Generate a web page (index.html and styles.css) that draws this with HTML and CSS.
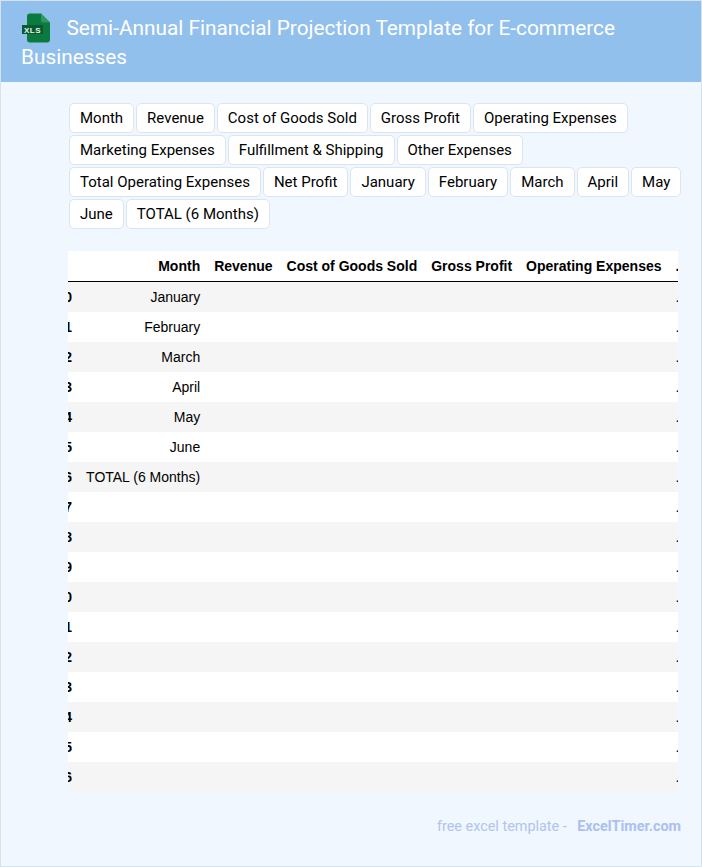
FILE: index.html
```html
<!DOCTYPE html>
<html lang="en">
<head>
<meta charset="utf-8">
<title>Semi-Annual Financial Projection Template for E-commerce Businesses</title>
<link rel="stylesheet" href="styles.css">
</head>
<body>
<div class="page">
  <header class="hero">
    <h1 class="title"><svg class="xls" viewBox="0 0 30 32" width="30" height="32" aria-hidden="true"><path d="M9 1.5h11l9 9v17a3 3 0 0 1-3 3H9a3 3 0 0 1-3-3v-23a3 3 0 0 1 3-3z" fill="#0b7a3e"/><path d="M20 1.5l9 9h-7a2 2 0 0 1-2-2z" fill="#2c9a5f"/><rect x="1" y="13" width="21" height="9" fill="#0a5a31"/><text x="11.5" y="20.6" class="xls-text" text-anchor="middle">XLS</text></svg>Semi-Annual Financial Projection Template for E-commerce Businesses</h1>
  </header>
  <main class="content">
    <div class="tags">
      <span class="tag">Month</span><span class="tag">Revenue</span><span class="tag">Cost of Goods Sold</span><span class="tag">Gross Profit</span><span class="tag">Operating Expenses</span><span class="tag">Marketing Expenses</span><span class="tag">Fulfillment &amp; Shipping</span><span class="tag">Other Expenses</span><span class="tag">Total Operating Expenses</span><span class="tag">Net Profit</span><span class="tag">January</span><span class="tag">February</span><span class="tag">March</span><span class="tag">April</span><span class="tag">May</span><span class="tag">June</span><span class="tag">TOTAL (6 Months)</span>
    </div>
    <div class="scroller">
      <table class="sheet">
        <thead>
          <tr><th class="idx"></th><th class="month">Month</th><th class="c-rev">Revenue</th><th class="c-cogs">Cost of Goods Sold</th><th class="c-gp">Gross Profit</th><th class="c-op">Operating Expenses</th><th>...</th></tr>
        </thead>
        <tbody>
          <tr><th class="idx">0</th><td>January</td><td></td><td></td><td></td><td></td><td>...</td></tr>
          <tr><th class="idx">1</th><td>February</td><td></td><td></td><td></td><td></td><td>...</td></tr>
          <tr><th class="idx">2</th><td>March</td><td></td><td></td><td></td><td></td><td>...</td></tr>
          <tr><th class="idx">3</th><td>April</td><td></td><td></td><td></td><td></td><td>...</td></tr>
          <tr><th class="idx">4</th><td>May</td><td></td><td></td><td></td><td></td><td>...</td></tr>
          <tr><th class="idx">5</th><td>June</td><td></td><td></td><td></td><td></td><td>...</td></tr>
          <tr><th class="idx">6</th><td>TOTAL (6 Months)</td><td></td><td></td><td></td><td></td><td>...</td></tr>
          <tr><th class="idx">7</th><td></td><td></td><td></td><td></td><td></td><td>...</td></tr>
          <tr><th class="idx">8</th><td></td><td></td><td></td><td></td><td></td><td>...</td></tr>
          <tr><th class="idx">9</th><td></td><td></td><td></td><td></td><td></td><td>...</td></tr>
          <tr><th class="idx">10</th><td></td><td></td><td></td><td></td><td></td><td>...</td></tr>
          <tr><th class="idx">11</th><td></td><td></td><td></td><td></td><td></td><td>...</td></tr>
          <tr><th class="idx">12</th><td></td><td></td><td></td><td></td><td></td><td>...</td></tr>
          <tr><th class="idx">13</th><td></td><td></td><td></td><td></td><td></td><td>...</td></tr>
          <tr><th class="idx">14</th><td></td><td></td><td></td><td></td><td></td><td>...</td></tr>
          <tr><th class="idx">15</th><td></td><td></td><td></td><td></td><td></td><td>...</td></tr>
          <tr><th class="idx">16</th><td></td><td></td><td></td><td></td><td></td><td>...</td></tr>
        </tbody>
      </table>
    </div>
    <p class="credit">free excel template - <a class="brand" href="#">ExcelTimer.com</a></p>
  </main>
</div>
</body>
</html>
```
FILE: styles.css
```css
* { box-sizing: border-box; }
html, body { margin: 0; padding: 0; }
body { background: #f0f7ff; font-family: Roboto, "Liberation Sans", sans-serif; }
.page { height: 867px; border: 1px solid #d6e2f2; overflow: hidden; background: #f0f7ff; }
.hero { background: #92c0ed; height: 81px; padding: 13px 20px 0; }
.title { margin: 0; font-size: 20.8px; font-weight: 400; line-height: 29px; color: #fff; }
.xls { vertical-align: middle; margin: -8px 15.5px -4px 0; }
.xls-text { font: 700 8px "Liberation Sans", sans-serif; fill: #e8f5ec; letter-spacing: .4px; }
.content { padding: 21px 20px 0 67px; }
.tags { display: flex; flex-wrap: wrap; gap: 2px; width: 614px; margin-left: 1px; }
.tag { height: 30px; line-height: 28px; padding: 0 10px; background: #fff; border: 1px solid #dbe5f1; border-radius: 5px; font-size: 15px; color: #000; white-space: nowrap; }
.scroller { margin-top: 22px; width: 610px; overflow: hidden; background: #fff; }
.sheet { border-collapse: separate; border-spacing: 0; font-family: "Liberation Sans", sans-serif; font-size: 14px; color: #000; margin-left: -18.5px; white-space: nowrap; }
.sheet th, .sheet td { height: 30px; padding: 0 7px; text-align: right; }
.sheet thead th { border-bottom: 1px solid #000; height: 31px; }
.sheet tbody tr:nth-child(odd) { background: #f5f5f5; }
.idx { width: 10px; min-width: 10px; }
.month { width: 132px; }
.credit { margin: 26px 0 0; width: 613px; text-align: right; font-size: 14.4px; color: #b0c4f0; }
.brand { margin-left: 7px; font-weight: 700; color: #abc0f0; text-decoration: none; }
```
